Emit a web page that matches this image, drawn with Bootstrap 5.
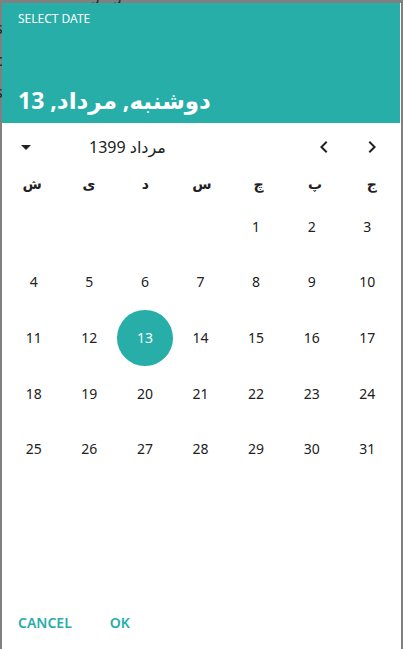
<!DOCTYPE html>
<html lang="en">
<head>
<meta charset="utf-8">
<meta name="viewport" content="width=device-width, initial-scale=1">
<title>Select date</title>
<link href="https://cdn.jsdelivr.net/npm/bootstrap@5.3.0/dist/css/bootstrap.min.css" rel="stylesheet">
<style>
:root { --teal: #27aea9; --ink: #212121; }
body { background: #808080; color: var(--ink); font-family: "Noto Sans", "DejaVu Sans", sans-serif; }
.backdrop-page { inset: 0; z-index: -1; color: #222; font-size: 16px; line-height: 16px; }
.backdrop-title { margin-top: -13px; padding-left: 4px; white-space: nowrap; font-size: 14px; }
.backdrop-list { margin-top: 10px; margin-left: -5px; }
.backdrop-list li { height: 32px; padding-top: 7px; }
.picker { margin: 3px 2px 0; padding-right: 1px; background: #fff; }
.picker-head { height: 120px; padding: 6px 16px 6px; background: var(--teal); }
.picker-label { font-size: 12px; line-height: 20px; }
.picker-title { font-size: 23px; line-height: 34px; }
.month-bar { height: 48px; padding-right: 4px; }
.icon-btn { width: 48px; height: 48px; color: var(--ink); }
.month-name { font-size: 16px; line-height: 24px; margin-left: 39px; }
.calendar { padding: 0 5px 0 4px; }
.calendar tr { display: grid; grid-template-columns: repeat(7, 1fr); }
.calendar thead { margin: 0 -5px 2px -2px; font-size: 14px; line-height: 26px; }
.calendar td { aspect-ratio: 1; }
.day { font-size: 14px; line-height: 20px; color: var(--ink); }
.day.chosen { background: var(--teal); color: #fff; }
.picker-actions { padding: 0 8px 8px; }
.action { min-width: 64px; height: 36px; padding: 0 8px; color: var(--teal); font-size: 14px; line-height: 20px; }
</style>
<script src="https://cdn.jsdelivr.net/npm/bootstrap@5.3.0/dist/js/bootstrap.bundle.min.js"></script>
</head>
<body class="min-vh-100 d-flex flex-column">
<div class="backdrop-page position-absolute overflow-hidden" aria-hidden="true">
  <div class="backdrop-title">converted to gregorian</div>
  <ul class="backdrop-list list-unstyled mb-0"><li>s</li><li>c</li><li>s</li></ul>
</div>
<main class="picker flex-grow-1 d-flex flex-column" role="dialog" aria-label="Select date">
  <header class="picker-head text-white d-flex flex-column justify-content-between">
    <div class="picker-label">SELECT DATE</div>
    <h1 class="picker-title fw-bold mb-0">دوشنبه, مرداد, 13</h1>
  </header>
  <div class="month-bar d-flex align-items-center">
    <button type="button" class="icon-btn btn p-0 border-0 d-flex align-items-center justify-content-center" aria-label="Choose year"><svg width="24" height="24" viewBox="0 0 24 24" fill="currentColor"><path d="M7 10l5 5 5-5z"/></svg></button>
    <h2 class="month-name fw-normal mb-0">مرداد 1399</h2>
    <button type="button" class="icon-btn btn p-0 border-0 d-flex align-items-center justify-content-center ms-auto" aria-label="Previous month"><svg width="24" height="24" viewBox="0 0 24 24" fill="currentColor"><path d="M15.41 7.41L14 6l-6 6 6 6 1.41-1.41L10.83 12z"/></svg></button>
    <button type="button" class="icon-btn btn p-0 border-0 d-flex align-items-center justify-content-center" aria-label="Next month"><svg width="24" height="24" viewBox="0 0 24 24" fill="currentColor"><path d="M10 6L8.59 7.41 13.17 12l-4.58 4.59L10 18l6-6z"/></svg></button>
  </div>
  <table class="calendar d-block text-center">
    <thead class="d-block"><tr><th class="p-0">ش</th><th class="p-0">ی</th><th class="p-0">د</th><th class="p-0">س</th><th class="p-0">چ</th><th class="p-0">پ</th><th class="p-0">ج</th></tr></thead>
    <tbody class="d-block" id="days"></tbody>
  </table>
  <footer class="picker-actions d-flex gap-2 mt-auto">
    <button type="button" class="action btn border-0 fw-semibold">CANCEL</button>
    <button type="button" class="action btn border-0 fw-semibold">OK</button>
  </footer>
</main>
<script>
const firstColumn = 4, dayCount = 31, chosen = 13;
let html = "";
for (let cell = 0; cell < firstColumn + dayCount; cell++) {
  const n = cell - firstColumn + 1;
  if (cell % 7 === 0) html += "<tr>";
  html += n < 1 ? "<td class='p-0'></td>" :
    `<td class="p-0"><button type="button" class="day btn p-0 border-0 rounded-circle w-100 h-100${n === chosen ? " chosen" : ""}">${n}</button></td>`;
  if (cell % 7 === 6) html += "</tr>";
}
document.getElementById("days").innerHTML = html;
</script>
</body>
</html>
